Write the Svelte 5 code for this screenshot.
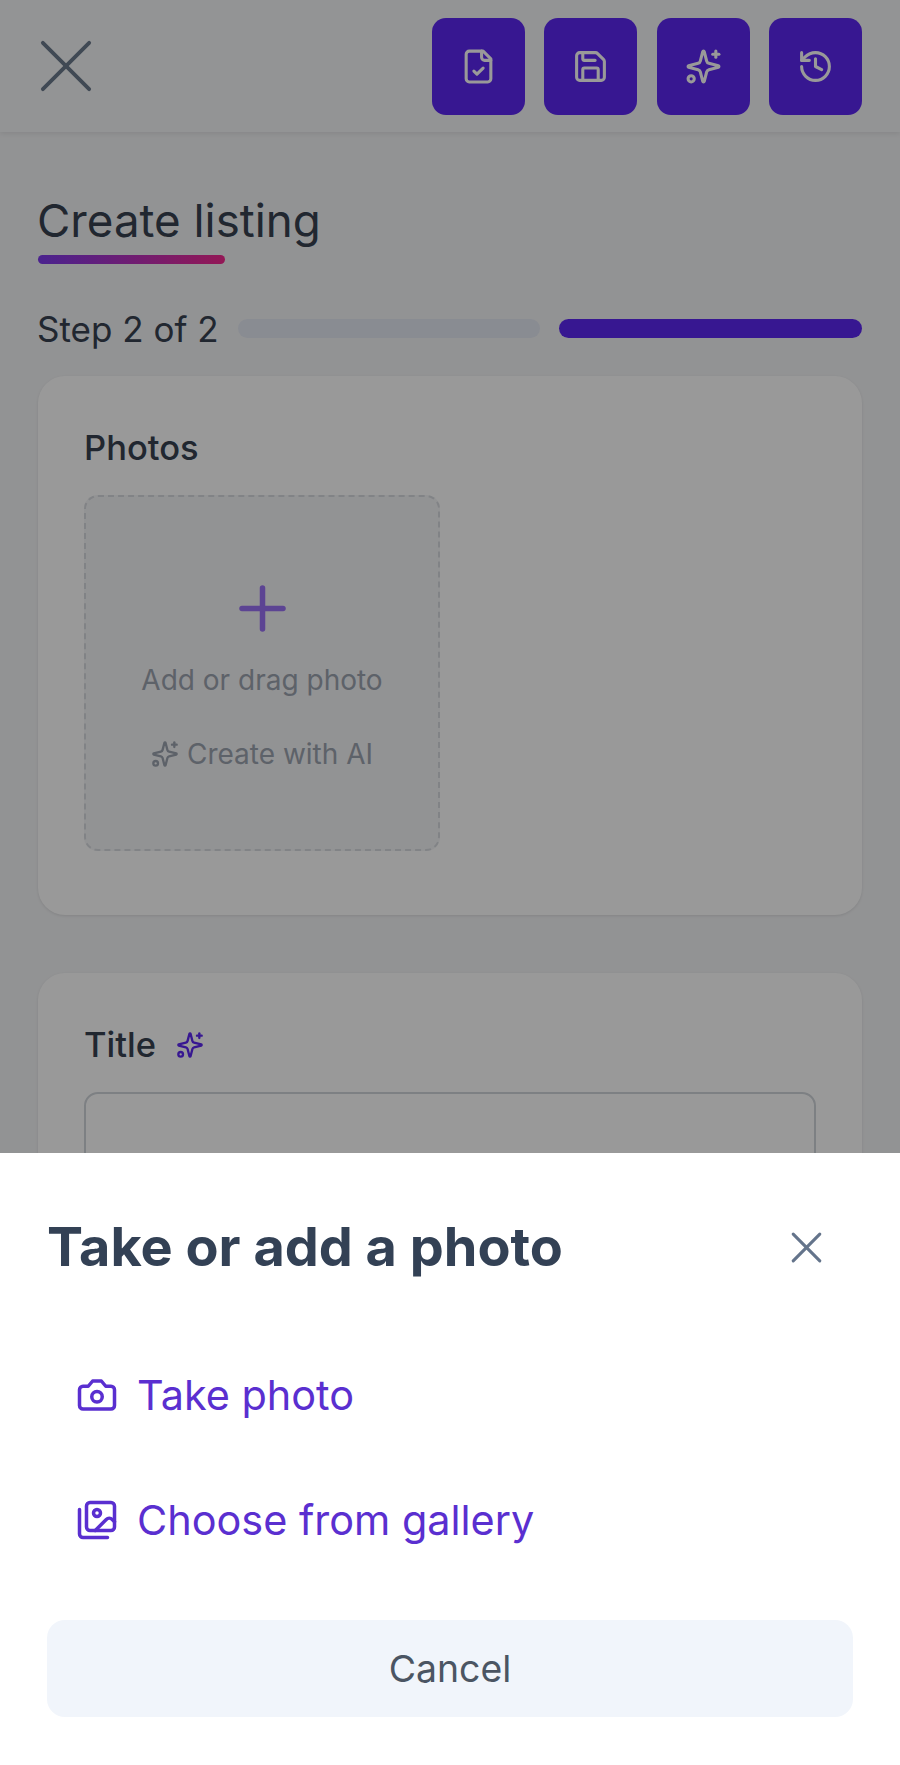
<script>
  const toolbar = ["file", "save", "sparkles", "history"];
</script>

{#snippet sparkles()}
  <path d="M9.937 15.5A2 2 0 0 0 8.5 14.063l-6.135-1.582a.5.5 0 0 1 0-.962L8.5 9.936A2 2 0 0 0 9.937 8.5l1.582-6.135a.5.5 0 0 1 .963 0L14.063 8.5A2 2 0 0 0 15.5 9.937l6.135 1.581a.5.5 0 0 1 0 .964L15.5 14.063a2 2 0 0 0-1.437 1.437l-1.582 6.135a.5.5 0 0 1-.963 0z" />
  <path d="M20 2v4" />
  <path d="M22 4h-4" />
  <circle cx="4" cy="20" r="2" />
{/snippet}

<div class="page">
  <header class="topbar">
    <svg class="close-main" viewBox="5 5 14 14"><path d="M18 6 6 18" /><path d="m6 6 12 12" /></svg>
    <div class="tools">
      {#each toolbar as tool}
        <button class="tool" aria-label={tool}>
          <svg viewBox="0 0 24 24">
            {#if tool === "file"}
              <path d="M15 2H6a2 2 0 0 0-2 2v16a2 2 0 0 0 2 2h12a2 2 0 0 0 2-2V7Z" />
              <path d="M14 2v4a2 2 0 0 0 2 2h4" />
              <path d="m9 15 2 2 4-4" />
            {:else if tool === "save"}
              <path d="M15.2 3a2 2 0 0 1 1.4.6l3.8 3.8a2 2 0 0 1 .6 1.4V19a2 2 0 0 1-2 2H5a2 2 0 0 1-2-2V5a2 2 0 0 1 2-2z" />
              <path d="M17 21v-7a1 1 0 0 0-1-1H8a1 1 0 0 0-1 1v7" />
              <path d="M7 3v4a1 1 0 0 0 1 1h7" />
            {:else if tool === "sparkles"}
              {@render sparkles()}
            {:else}
              <path d="M3 12a9 9 0 1 0 9-9 9.75 9.75 0 0 0-6.74 2.74L3 8" />
              <path d="M3 3v5h5" />
              <path d="M12 7v5l4 2" />
            {/if}
          </svg>
        </button>
      {/each}
    </div>
  </header>

  <main class="content">
    <h1>Create listing</h1>
    <div class="underline"></div>

    <div class="steps">
      <span>Step 2 of 2</span>
      <div class="bar"></div>
      <div class="bar active"></div>
    </div>

    <section class="card photos">
      <h2>Photos</h2>
      <div class="dropzone">
        <svg class="plus" viewBox="0 0 47 47"><path d="M23.5 3v41" /><path d="M3 23.5h41" /></svg>
        <span class="add">Add or drag photo</span>
        <span class="ai">
          <svg viewBox="0 0 24 24">{@render sparkles()}</svg>
          Create with AI
        </span>
      </div>
    </section>

    <section class="card">
      <h2 class="title-label">
        Title
        <svg viewBox="0 0 24 24">{@render sparkles()}</svg>
      </h2>
      <div class="input"></div>
    </section>
  </main>

  <div class="overlay"></div>

  <div class="sheet">
    <div class="sheet-head">
      <h3>Take or add a photo</h3>
      <svg class="close-sheet" viewBox="5 5 14 14"><path d="M18 6 6 18" /><path d="m6 6 12 12" /></svg>
    </div>
    <div class="option">
      <svg viewBox="0 0 24 24">
        <path d="M14.5 4h-5L7 7H4a2 2 0 0 0-2 2v9a2 2 0 0 0 2 2h16a2 2 0 0 0 2-2V9a2 2 0 0 0-2-2h-3l-2.5-3z" />
        <circle cx="12" cy="13" r="3" />
      </svg>
      Take photo
    </div>
    <div class="option">
      <svg viewBox="0 0 24 24">
        <path d="M18 22H4a2 2 0 0 1-2-2V6" />
        <path d="m22 13-1.296-1.296a2.41 2.41 0 0 0-3.408 0L11 18" />
        <circle cx="12" cy="8" r="2" />
        <rect width="16" height="16" x="6" y="2" rx="2" />
      </svg>
      Choose from gallery
    </div>
    <button class="cancel">Cancel</button>
  </div>
</div>

<style>
  :global(body) {
    margin: 0;
  }

  .page {
    position: relative;
    height: 1765px;
    overflow: hidden;
    background: #f4f5f7;
    font-family: Inter, "Liberation Sans", sans-serif;
    color: #374151;
  }

  svg {
    fill: none;
    stroke: currentColor;
    stroke-width: 2;
    stroke-linecap: round;
    stroke-linejoin: round;
    flex: none;
  }

  .topbar {
    display: flex;
    align-items: center;
    justify-content: space-between;
    height: 132px;
    padding: 0 38px 0 39px;
    box-sizing: border-box;
    background: #f6f7f8;
    box-shadow: 0 2px 5px rgba(0, 0, 0, 0.08);
  }

  .close-main {
    width: 54px;
    height: 54px;
    stroke-width: 1;
    color: #6b7a8d;
  }

  .tools {
    display: flex;
    gap: 19.5px;
  }

  .tool {
    display: flex;
    align-items: center;
    justify-content: center;
    width: 93px;
    height: 97px;
    padding: 0;
    border: none;
    border-radius: 14px;
    background: #5c27f2;
    color: #fff;
  }

  .tool svg {
    width: 37px;
    height: 37px;
  }

  .content {
    padding: 62px 38px 0;
  }

  h1 {
    margin: 0 0 0 -1px;
    font-size: 45.7px;
    line-height: 54px;
    font-weight: 400;
    color: #374151;
  }

  .underline {
    width: 187px;
    height: 9px;
    margin-top: 7px;
    border-radius: 5px;
    background: linear-gradient(90deg, #7c3aed, #f5288f);
  }

  .steps {
    display: flex;
    align-items: center;
    gap: 19px;
    margin-top: 36.5px;
    font-size: 35px;
    line-height: 56px;
  }

  .steps span {
    margin-left: -1px;
  }

  .bar {
    flex: 1;
    height: 19px;
    border-radius: 10px;
    background: #e4e9f4;
  }

  .bar.active {
    background: #5c27f2;
  }

  .card {
    padding: 52px 46px 47px;
    border-radius: 27px;
    background: #fff;
    box-shadow: 0 1px 3px rgba(0, 0, 0, 0.1);
  }

  .photos {
    margin-top: 19.5px;
    height: 539px;
    box-sizing: border-box;
    margin-bottom: 58px;
  }

  h2 {
    margin: 0;
    font-size: 34.5px;
    line-height: 40px;
    font-weight: 500;
    color: #374151;
  }

  .dropzone {
    display: flex;
    flex-direction: column;
    align-items: center;
    box-sizing: border-box;
    width: 356px;
    height: 356px;
    margin-top: 27px;
    padding-top: 88px;
    border: 2px dashed #d8dbe0;
    border-radius: 14px;
    background: #f4f5f7;
    color: #9ca3af;
    font-size: 28px;
    line-height: 36px;
  }

  .plus {
    width: 47px;
    height: 47px;
    stroke-width: 5.5;
    color: #9a72f5;
  }

  .add {
    margin-top: 30px;
  }

  .ai {
    display: flex;
    align-items: center;
    gap: 8px;
    margin-top: 38px;
  }

  .ai svg {
    width: 28px;
    height: 28px;
  }

  .title-label {
    display: flex;
    align-items: center;
    gap: 20px;
  }

  .title-label svg {
    width: 28px;
    height: 28px;
    color: #5c27f2;
  }

  .input {
    height: 120px;
    margin-top: 27px;
    border: 2px solid #d1d5db;
    border-radius: 14px;
  }

  .overlay {
    position: absolute;
    inset: 0;
    background: rgba(0, 0, 0, 0.4);
  }

  .sheet {
    position: absolute;
    left: 0;
    right: 0;
    bottom: 0;
    height: 612px;
    box-sizing: border-box;
    padding: 57px 47px 0;
    background: #fff;
  }

  .sheet-head {
    display: flex;
    align-items: center;
    justify-content: space-between;
    padding-right: 31px;
    margin-bottom: 48px;
  }

  h3 {
    margin: 0;
    font-size: 54px;
    line-height: 74px;
    font-weight: 700;
    color: #334155;
  }

  .close-sheet {
    width: 31px;
    height: 31px;
    stroke-width: 1.4;
    color: #64748b;
  }

  .option {
    display: flex;
    align-items: center;
    gap: 19px;
    height: 125px;
    padding-left: 29px;
    font-size: 41.4px;
    color: #5a2fd0;
  }

  .option svg {
    width: 42px;
    height: 42px;
  }

  .cancel {
    display: block;
    width: 100%;
    height: 97px;
    margin-top: 38px;
    border: none;
    border-radius: 18px;
    background: #f1f5fb;
    color: #4b5563;
    font-family: inherit;
    font-size: 37.4px;
  }
</style>
